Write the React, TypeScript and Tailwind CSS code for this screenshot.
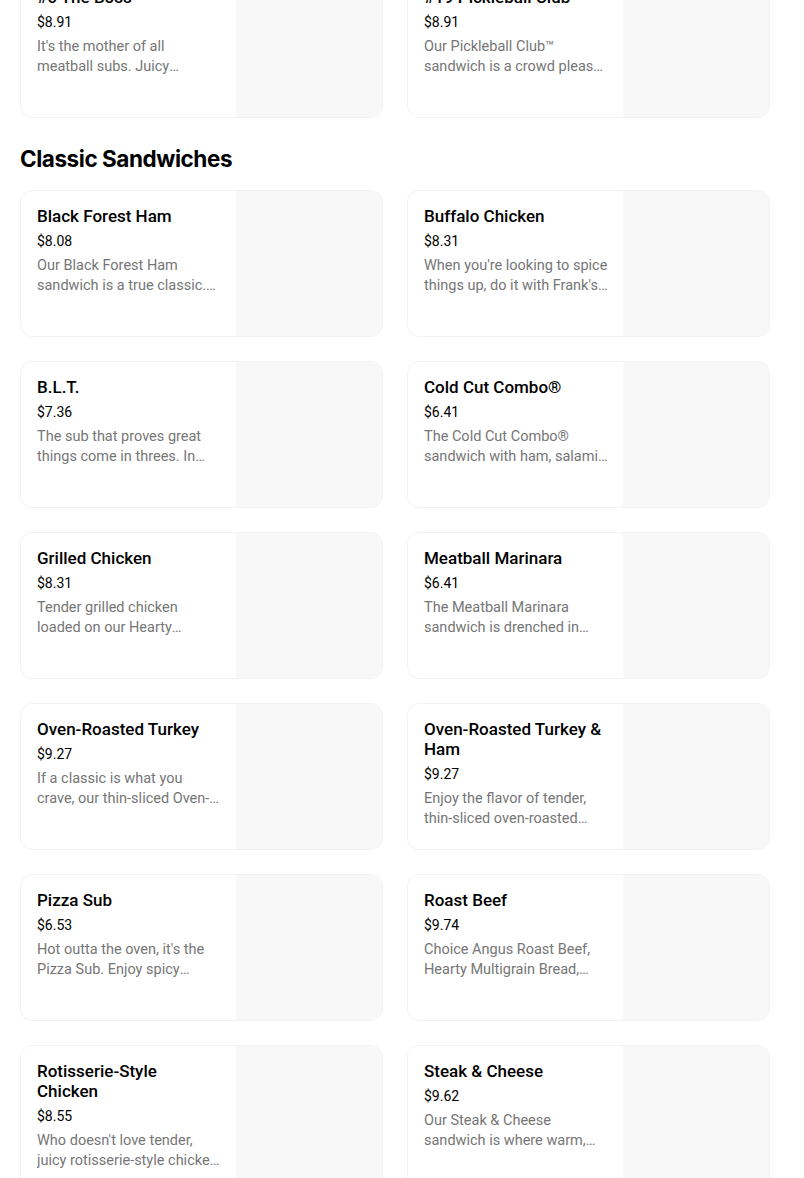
type Item = { name: string; price: string; desc: string };

const previous: Item[] = [
  { name: '#6 The Boss', price: '$8.91', desc: "It's the mother of all meatball subs. Juicy meatballs smothered in marinara sauce." },
  { name: '#19 Pickleball Club™', price: '$8.91', desc: 'Our Pickleball Club™ sandwich is a crowd pleaser with turkey, bacon and pickles.' },
];

const classics: Item[] = [
  { name: 'Black Forest Ham', price: '$8.08', desc: 'Our Black Forest Ham sandwich is a true classic. Served on freshly baked bread.' },
  { name: 'Buffalo Chicken', price: '$8.31', desc: "When you're looking to spice things up, do it with Frank's RedHot® sauce." },
  { name: 'B.L.T.', price: '$7.36', desc: 'The sub that proves great things come in threes. In this case, bacon, lettuce and tomato.' },
  { name: 'Cold Cut Combo®', price: '$6.41', desc: 'The Cold Cut Combo® sandwich with ham, salami and bologna, all turkey-based.' },
  { name: 'Grilled Chicken', price: '$8.31', desc: 'Tender grilled chicken loaded on our Hearty Multigrain bread with your favorite veggies.' },
  { name: 'Meatball Marinara', price: '$6.41', desc: 'The Meatball Marinara sandwich is drenched in irresistible marinara sauce.' },
  { name: 'Oven-Roasted Turkey', price: '$9.27', desc: 'If a classic is what you crave, our thin-sliced Oven-Roasted Turkey is for you.' },
  { name: 'Oven-Roasted Turkey & Ham', price: '$9.27', desc: 'Enjoy the flavor of tender, thin-sliced oven-roasted turkey and Black Forest ham.' },
  { name: 'Pizza Sub', price: '$6.53', desc: "Hot outta the oven, it's the Pizza Sub. Enjoy spicy pepperoni and melty cheese." },
  { name: 'Roast Beef', price: '$9.74', desc: 'Choice Angus Roast Beef, Hearty Multigrain Bread, lettuce, tomatoes and onions.' },
  { name: 'Rotisserie-Style Chicken', price: '$8.55', desc: "Who doesn't love tender, juicy rotisserie-style chicken on freshly baked bread?" },
  { name: 'Steak & Cheese', price: '$9.62', desc: 'Our Steak & Cheese sandwich is where warm, tender steak meets melty cheese.' },
];

function MenuCard({ item }: { item: Item }) {
  return (
    <div className="flex h-[147px] overflow-hidden rounded-xl border border-[#f3f3f3] bg-white">
      <div className="flex-1 min-w-0 pl-4 pr-[14px] pt-[15px]">
        <h3 className="text-[17px] leading-5 font-medium text-black">{item.name}</h3>
        <p className="mt-[5px] text-sm leading-5 text-black">{item.price}</p>
        <p className="mt-[5px] line-clamp-2 text-[14.5px] leading-5 text-[#767676]">{item.desc}</p>
      </div>
      <div className="w-[146px] shrink-0 bg-[#f8f8f8]" />
    </div>
  );
}

export default function App() {
  return (
    <div className="min-h-screen bg-white px-5 font-['Roboto',sans-serif] text-black">
      <div className="-mt-[29px] grid w-[750px] grid-cols-2 gap-6">
        {previous.map(item => (
          <MenuCard key={item.name} item={item} />
        ))}
      </div>

      <h2 className="pt-[25px] pb-[15px] font-['Inter',sans-serif] text-[22.5px] leading-8 font-bold tracking-[-0.02em]">
        Classic Sandwiches
      </h2>

      <div className="grid w-[750px] grid-cols-2 gap-6">
        {classics.map(item => (
          <MenuCard key={item.name} item={item} />
        ))}
      </div>
    </div>
  );
}
